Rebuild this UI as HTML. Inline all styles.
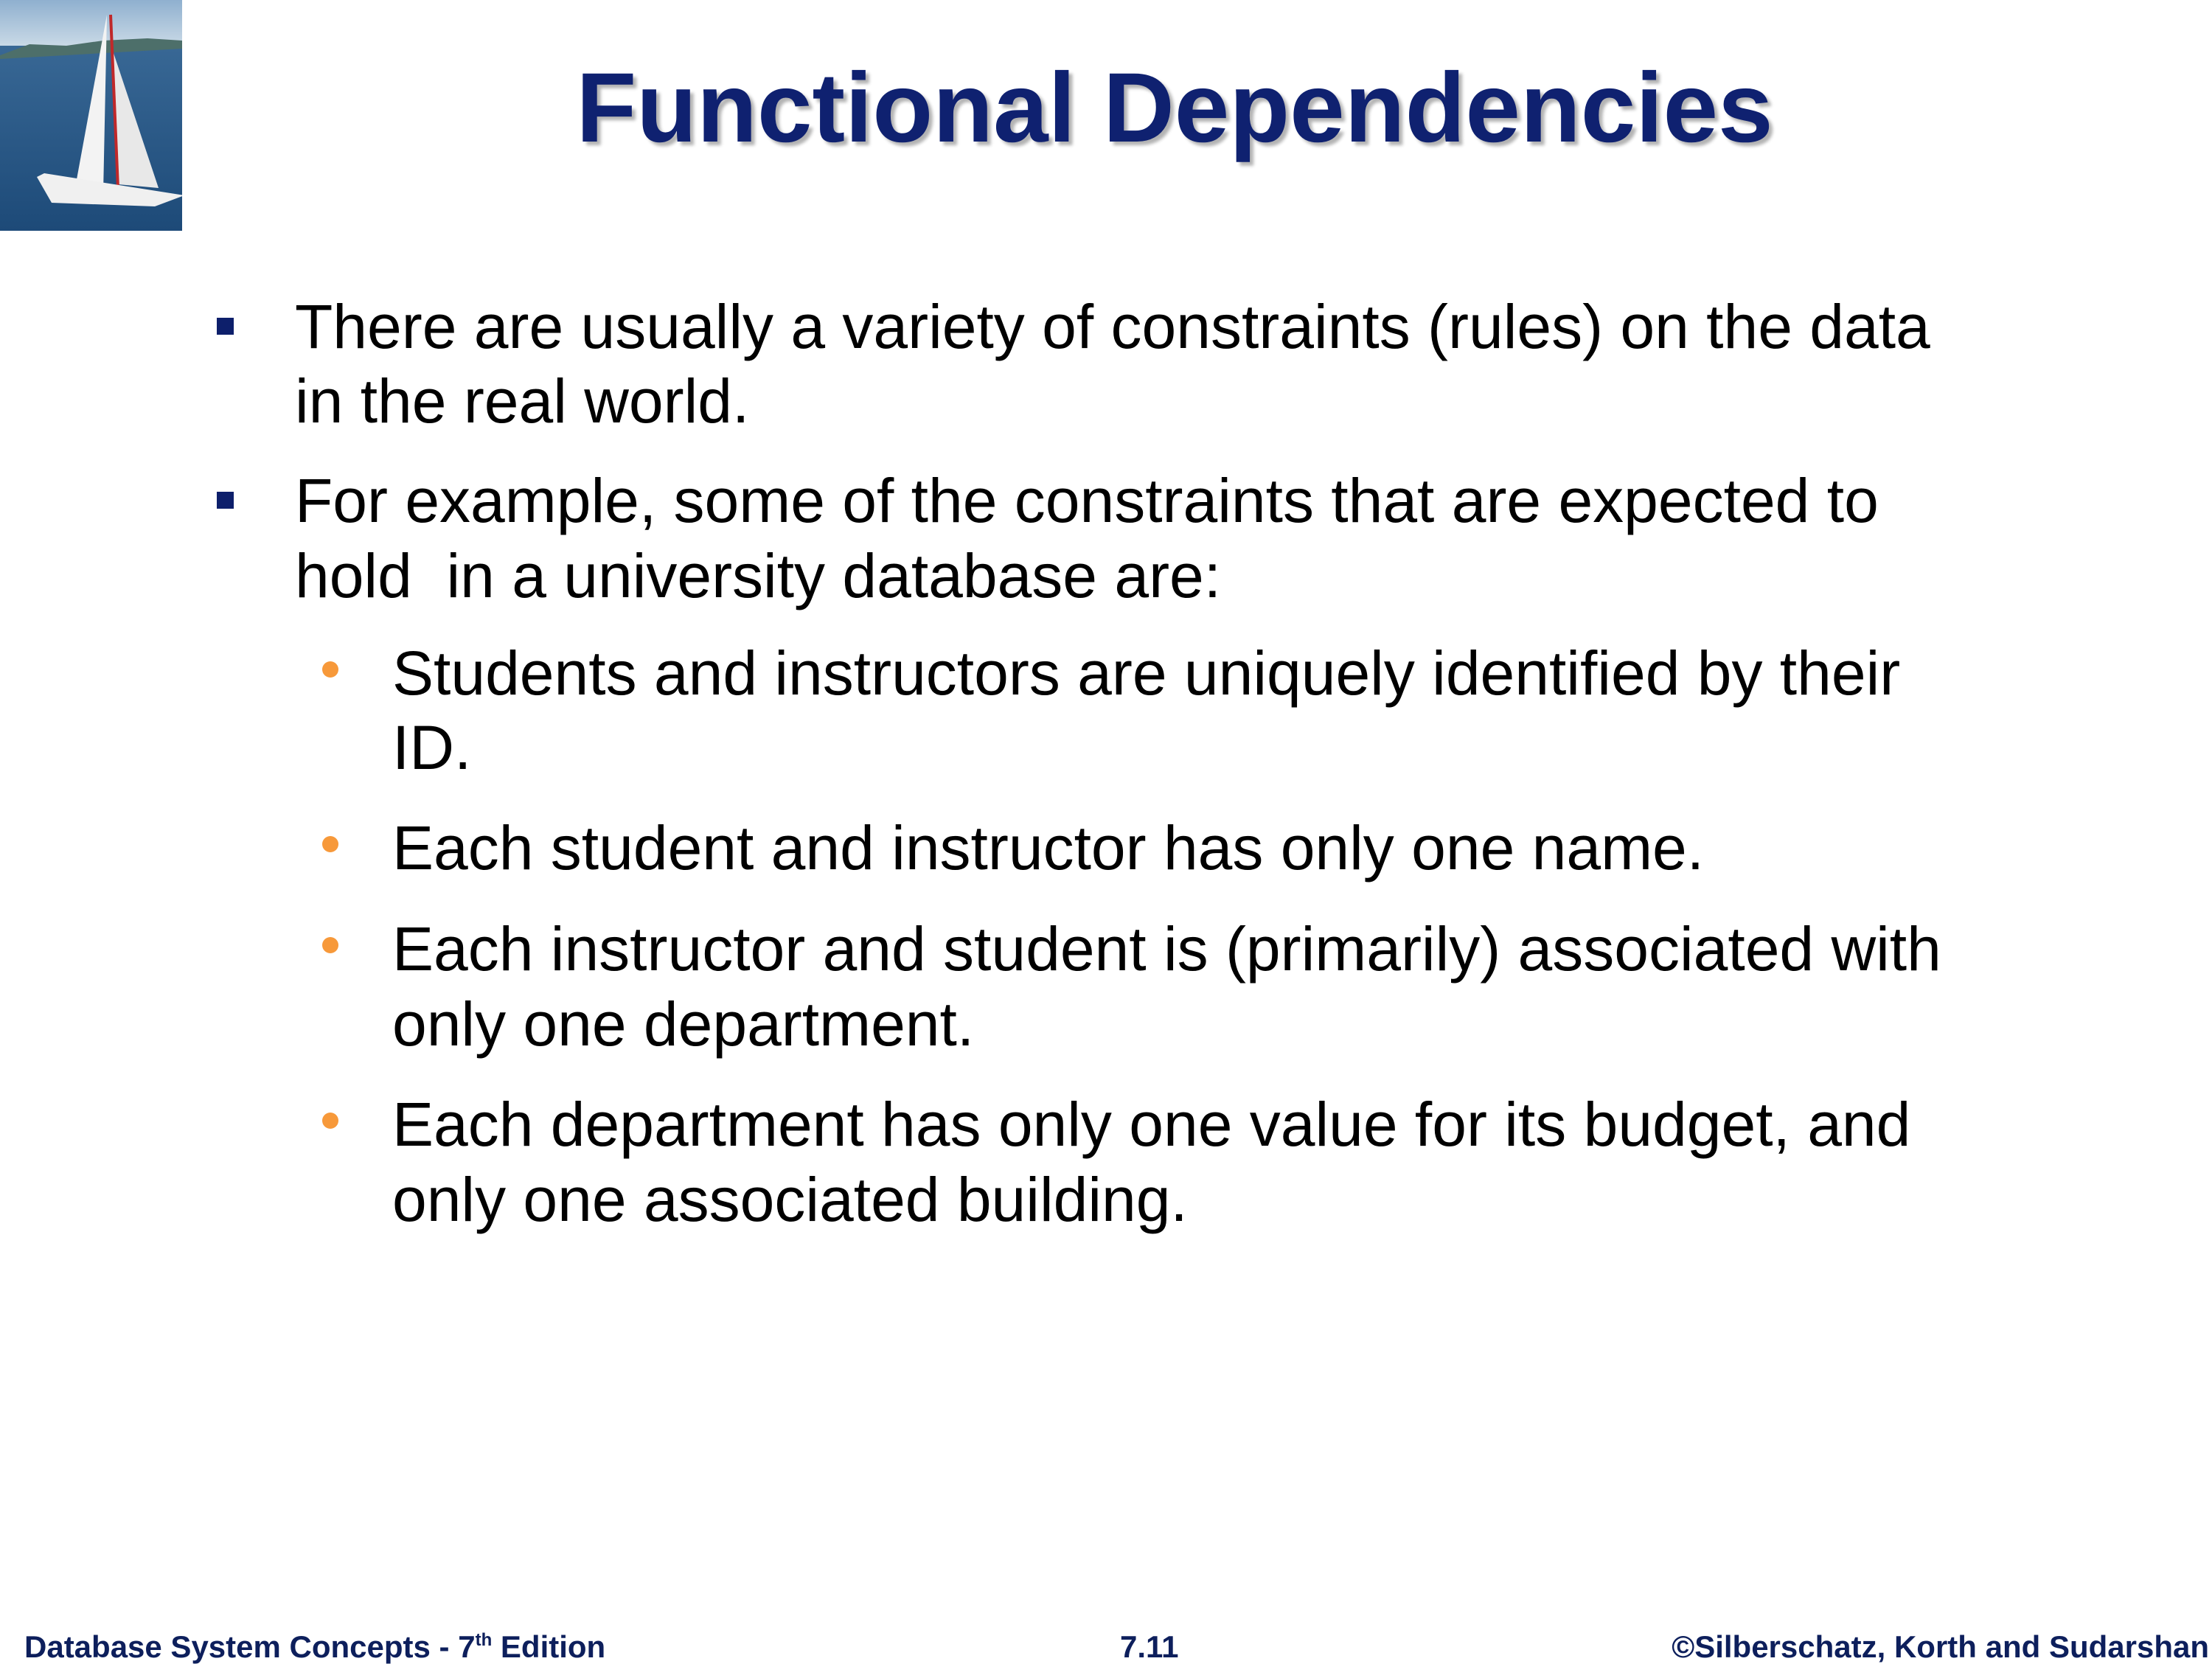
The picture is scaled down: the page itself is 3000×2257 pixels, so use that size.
<!DOCTYPE html>
<html><head><meta charset="utf-8"><style>
html,body{margin:0;padding:0;background:#fff;}
body{width:3000px;height:2250px;position:relative;overflow:hidden;font-family:"Liberation Sans",Arial,sans-serif;}
.t{position:absolute;white-space:nowrap;line-height:1;}
.b{font-size:84px;color:#000;}
.sq{position:absolute;width:23px;height:23px;background:#0d1f6b;}
.dot{position:absolute;width:22px;height:22px;border-radius:50%;background:#f7993a;}
.f{font-size:42px;font-weight:bold;color:#0d1f5c;}
</style></head><body>
<svg style="position:absolute;left:0;top:0" width="247" height="313" viewBox="0 0 247 313">
<defs>
<linearGradient id="sky" x1="0" y1="0" x2="0" y2="1"><stop offset="0" stop-color="#8fb0cf"/><stop offset="1" stop-color="#c9d9e6"/></linearGradient>
<linearGradient id="sea" x1="0" y1="0" x2="0" y2="1"><stop offset="0" stop-color="#3f6f9c"/><stop offset="1" stop-color="#1d4a78"/></linearGradient>
</defs>
<rect width="247" height="313" fill="url(#sea)"/>
<rect width="247" height="62" fill="url(#sky)"/>
<path d="M0 75 L40 60 L90 62 L140 55 L200 52 L247 55 L247 66 L0 80Z" fill="#4d6f6a"/>
<path d="M145 20 L100 265 L140 262Z" fill="#f3f3f3"/>
<path d="M150 60 L160 250 L215 255Z" fill="#e8e8e8"/>
<line x1="150" y1="20" x2="160" y2="255" stroke="#c0282a" stroke-width="4"/>
<path d="M50 240 L70 275 L210 280 L250 265 L60 235Z" fill="#f0f0f0"/>
</svg>
<div class="t" style="left:0;width:3186px;text-align:center;top:80px;font-size:134px;font-weight:bold;color:#0f2170;text-shadow:5px 5px 4px rgba(0,0,0,0.3);">Functional Dependencies</div>

<div class="sq" style="left:294px;top:431px"></div>
<div class="t b" style="left:400px;top:401px">There are usually a variety of constraints (rules) on the data</div>
<div class="t b" style="left:400px;top:502px">in the real world.</div>
<div class="sq" style="left:294px;top:667px"></div>
<div class="t b" style="left:400px;top:637px">For example, some of the constraints that are expected to</div>
<div class="t b" style="left:400px;top:739px">hold &nbsp;in a university database are:</div>

<div class="dot" style="left:437px;top:897px"></div>
<div class="t b" style="left:532px;top:871px">Students and instructors are uniquely identified by their</div>
<div class="t b" style="left:532px;top:972px">ID.</div>
<div class="dot" style="left:437px;top:1134px"></div>
<div class="t b" style="left:532px;top:1108px">Each student and instructor has only one name.</div>
<div class="dot" style="left:437px;top:1271px"></div>
<div class="t b" style="left:532px;top:1245px">Each instructor and student is (primarily) associated with</div>
<div class="t b" style="left:532px;top:1347px">only one department.</div>
<div class="dot" style="left:437px;top:1509px"></div>
<div class="t b" style="left:532px;top:1483px">Each department has only one value for its budget, and</div>
<div class="t b" style="left:532px;top:1585px">only one associated building.</div>

<div class="t f" style="left:33px;top:2213px">Database System Concepts - 7<sup style="font-size:24px;vertical-align:16px;line-height:0">th</sup> Edition</div>
<div class="t f" style="left:1519px;top:2213px">7.11</div>
<div class="t f" style="right:4px;top:2213px">©Silberschatz, Korth and Sudarshan</div>
</body></html>
